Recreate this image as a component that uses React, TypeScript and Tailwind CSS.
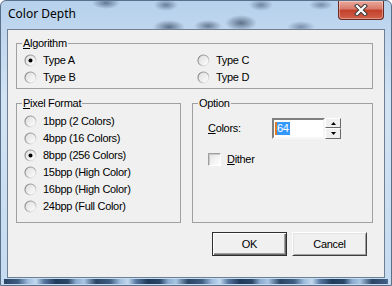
import React, { useId } from "react";

const Radio: React.FC<{ checked?: boolean }> = ({ checked }) => {
  const id = useId();
  return (
    <svg width="13" height="13" viewBox="0 0 13 13" className="shrink-0">
      <defs>
        <linearGradient id={id + "s"} x1="0" y1="0" x2="1" y2="1">
          <stop offset="0%" stopColor="#7d7d7d" />
          <stop offset="55%" stopColor="#b4b4b4" />
          <stop offset="100%" stopColor="#ffffff" />
        </linearGradient>
        <linearGradient id={id + "f"} x1="0" y1="0" x2="1" y2="1">
          <stop offset="0%" stopColor="#dcdcdc" />
          <stop offset="100%" stopColor="#ffffff" />
        </linearGradient>
      </defs>
      <circle cx="6.5" cy="6.5" r="5.5" fill={`url(#${id}f)`} stroke={`url(#${id}s)`} strokeWidth="1.2" />
      {checked && <circle cx="6.5" cy="6.5" r="2" fill="#000" />}
    </svg>
  );
};

const RadioRow: React.FC<{ label: string; checked?: boolean }> = ({ label, checked }) => (
  <div className="flex items-center h-[17px] gap-[6px]">
    <Radio checked={checked} />
    <span className="leading-[13px]">{label}</span>
  </div>
);

const Arrow: React.FC<{ up?: boolean }> = ({ up }) => (
  <svg width="5" height="3" viewBox="0 0 5 3">
    <path d={up ? "M2.5 0 L5 3 L0 3Z" : "M0 0 L5 0 L2.5 3Z"} fill="#000" />
  </svg>
);

export default function App() {
  return (
    <div className="w-[392px] h-[286px] flex flex-col overflow-hidden rounded-t-[6px] border border-[#5a6f88] bg-[linear-gradient(180deg,#b7d1ec,#d2e3f4_35%,#c5dbf0)] font-['Liberation_Sans',Arial,sans-serif] text-[11px] tracking-[-0.3px] text-black">
      {/* title bar */}
      <div className="h-[28px] flex items-start pl-[7px] pr-[7px] bg-[radial-gradient(ellipse_14px_6px_at_105px_2px,rgba(40,60,90,0.6),transparent),radial-gradient(ellipse_12px_6px_at_165px_4px,rgba(40,60,90,0.55),transparent),radial-gradient(ellipse_16px_7px_at_168px_26px,rgba(30,45,70,0.6),transparent),radial-gradient(ellipse_14px_6px_at_207px_25px,rgba(30,45,70,0.55),transparent),radial-gradient(ellipse_16px_8px_at_240px_22px,rgba(30,45,70,0.6),transparent),radial-gradient(ellipse_12px_6px_at_260px_4px,rgba(40,60,90,0.5),transparent),radial-gradient(ellipse_14px_6px_at_300px_26px,rgba(40,60,90,0.45),transparent),radial-gradient(ellipse_12px_5px_at_320px_4px,rgba(40,60,90,0.45),transparent)]">
        <span className="mt-[5px] font-['Noto_Sans',sans-serif] text-[12px] leading-[16px] tracking-normal">
          Color Depth
        </span>
        <div className="ml-auto w-[46px] h-[19px] flex items-center justify-center rounded-b-[4px] border border-t-0 border-[#6b2a22] bg-[linear-gradient(180deg,#e9a99c,#d9796a_45%,#c2402a_50%,#d1604a)] shadow-[inset_0_0_0_1px_rgba(255,255,255,0.35)]">
          <svg width="14" height="12" viewBox="0 0 14 12">
            <path d="M3 2 L11 10 M11 2 L3 10" stroke="#3b3b3b" strokeWidth="4.2" strokeLinecap="square" />
            <path d="M3 2 L11 10 M11 2 L3 10" stroke="#fff" strokeWidth="2.2" strokeLinecap="square" />
          </svg>
        </div>
      </div>

      {/* client area */}
      <div className="mx-[6px] h-[249px] border border-[#6f8092] bg-[#f0f0f0] pl-[8px] pr-[11px] pt-[7px]">
        <fieldset className="w-[357px] h-[52px] border border-[#a0a0a0]">
          <legend className="ml-[5px] px-[1px] leading-[13px]">
            <span className="underline">A</span>lgorithm
          </legend>
          <div className="grid grid-cols-[173px_1fr] pl-[7px] pt-[2px]">
            <RadioRow label="Type A" checked />
            <RadioRow label="Type C" />
            <RadioRow label="Type B" />
            <RadioRow label="Type D" />
          </div>
        </fieldset>

        <div className="flex gap-[11px] mt-[8px]">
          <fieldset className="w-[165px] h-[126px] border border-[#a0a0a0]">
            <legend className="ml-[5px] px-[1px] leading-[13px]">
              <span className="underline">P</span>ixel Format
            </legend>
            <div className="flex flex-col pl-[7px] pt-[3px]">
              <RadioRow label="1bpp (2 Colors)" />
              <RadioRow label="4bpp (16 Colors)" />
              <RadioRow label="8bpp (256 Colors)" checked />
              <RadioRow label="15bpp (High Color)" />
              <RadioRow label="16bpp (High Color)" />
              <RadioRow label="24bpp (Full Color)" />
            </div>
          </fieldset>

          <fieldset className="w-[181px] h-[126px] border border-[#a0a0a0]">
            <legend className="ml-[5px] px-[1px] leading-[13px]">Option</legend>
            <div className="flex flex-col pl-[15px] pt-[8px]">
              <div className="flex items-center">
                <span className="w-[64px] leading-[13px]">
                  <span className="underline">C</span>olors:
                </span>
                <div className="w-[53px] h-[21px] border-2 border-t-[#7f7f7f] border-l-[#7f7f7f] border-r-[#f6f6f6] border-b-[#f6f6f6] bg-white flex items-center pl-[1px]">
                  <span className="border-l-2 border-[#e0782a] bg-[#3399ff] text-white leading-[13px] pr-[1px]">64</span>
                </div>
                <div className="flex flex-col w-[16px] h-[21px]">
                  <div className="h-[10px] flex items-center justify-center border border-t-white border-l-white border-r-[#696969] border-b-[#696969] bg-[#f0f0f0]">
                    <Arrow up />
                  </div>
                  <div className="h-[11px] flex items-center justify-center border border-t-white border-l-white border-r-[#696969] border-b-[#696969] bg-[#f0f0f0]">
                    <Arrow />
                  </div>
                </div>
              </div>
              <div className="flex items-center gap-[6px] mt-[14px]">
                <div className="w-[13px] h-[13px] border border-t-[#a0a0a0] border-l-[#a0a0a0] border-r-[#ffffff] border-b-[#ffffff] bg-[linear-gradient(135deg,#e4e4e4,#ffffff)] shadow-[inset_1px_1px_0_#c8c8c8]" />
                <span className="leading-[13px]">
                  <span className="underline">D</span>ither
                </span>
              </div>
            </div>
          </fieldset>
        </div>

        <div className="flex justify-end gap-[5px] pr-[6px] mt-[9px]">
          <button className="w-[75px] h-[24px] border border-[#2e2e2e] bg-[#f0f0f0] shadow-[inset_1px_1px_0_#fff,inset_-1px_-1px_0_#696969,inset_-2px_-2px_0_#a0a0a0]">
            OK
          </button>
          <button className="w-[75px] h-[24px] border border-t-white border-l-white border-r-[#404040] border-b-[#404040] bg-[#f0f0f0] shadow-[inset_1px_1px_0_#e3e3e3,inset_-1px_-1px_0_#a0a0a0]">
            Cancel
          </button>
        </div>
      </div>

      {/* bottom frame */}
      <div className="h-[7px] px-[3px] pt-[1px] pb-[1px]">
        <div className="h-full bg-[repeating-linear-gradient(90deg,#2a4565_0,#3e5d82_14px,#9dbbdc_24px,#c2d8ee_32px,#5577a0_40px,#1f3a5b_52px,#2b4768_64px,#88a9ce_72px,#a9c6e4_80px,#2a4565_92px)]" />
      </div>
    </div>
  );
}
